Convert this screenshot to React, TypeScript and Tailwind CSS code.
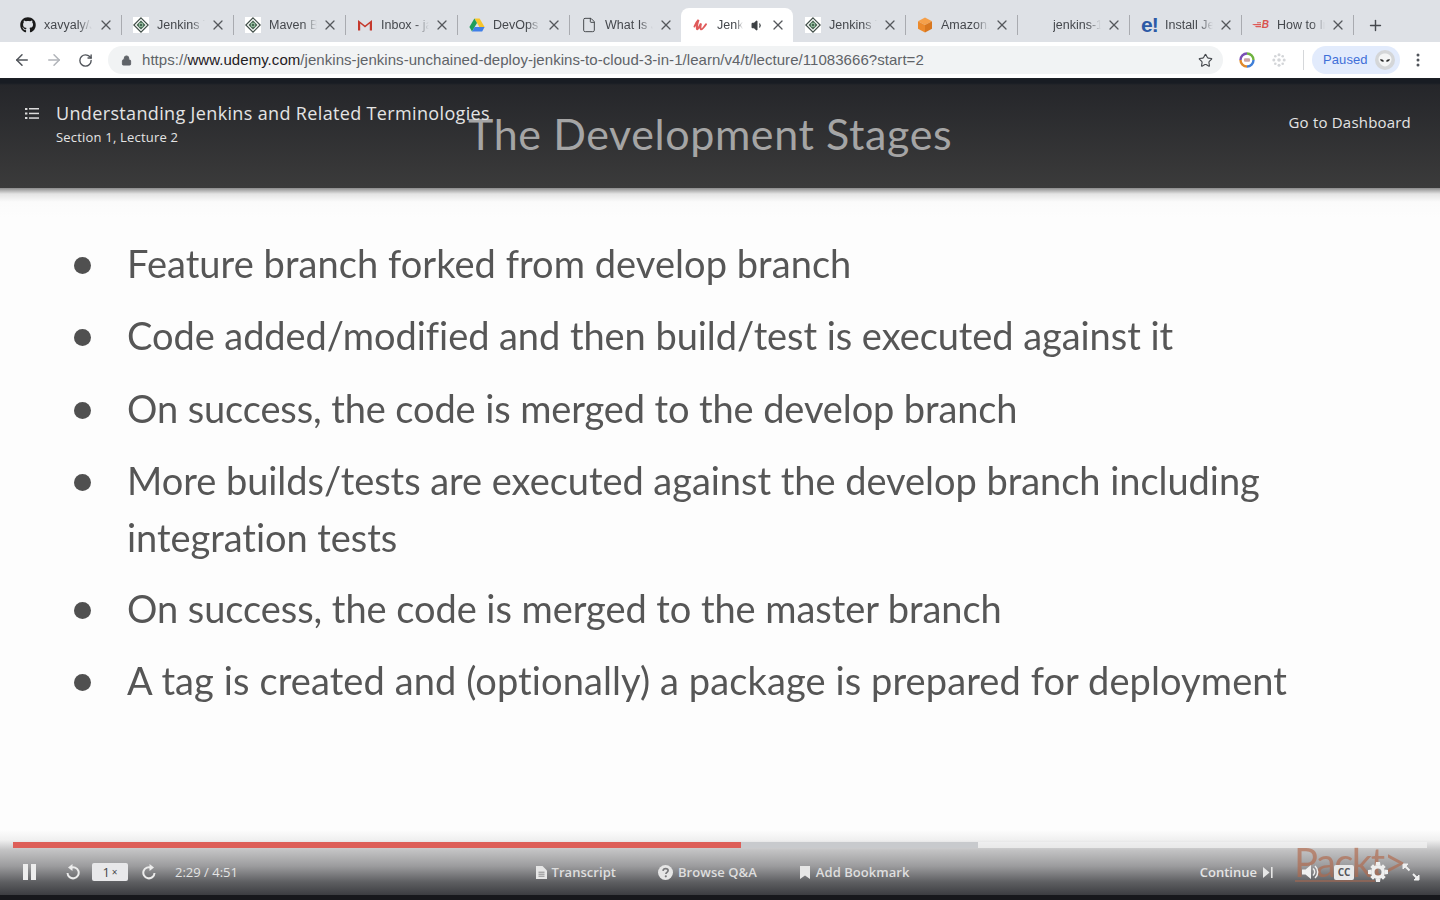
import React from "react";
import { ArrowLeft, ArrowRight, RotateCw, Star, X, Plus, File, Lock, Volume1 } from "lucide-react";
import { FaGithub } from "react-icons/fa";

const JenkinsIcon = () => (
  <svg width="16" height="16" viewBox="0 0 16 16" className="bg-white shrink-0">
    <path d="M8 .8 15.2 8 8 15.2.8 8Z" fill="#f4f6f4" stroke="#3c4a44" strokeWidth="1.1" />
    <path d="M8 3.6 12.4 8 8 12.4 3.6 8Z" fill="#3d5e49" />
    <circle cx="8" cy="8" r="2.4" fill="#8fb89a" />
    <circle cx="8" cy="8" r="1" fill="#2f4a3a" />
  </svg>
);
const GmailIcon = () => (
  <svg width="16" height="16" viewBox="0 0 16 16" className="shrink-0">
    <path d="M1 13.5V3l7 5.6L15 3v10.5h-2.2V6.6L8 10.6 3.2 6.6v6.9Z" fill="#c5392c" />
  </svg>
);
const DriveIcon = () => (
  <svg width="16" height="16" viewBox="0 0 16 16" className="shrink-0">
    <path d="M5.4 1.5h5.2l5 8.5h-5.2Z" fill="#f7c52b" />
    <path d="M5.4 1.5 .4 10l2.6 4.5 5-8.5Z" fill="#1e9e5a" />
    <path d="M3 14.5h10.2l2.4-4.5H5.6Z" fill="#3f7fe8" />
  </svg>
);
const UdemyIcon = () => (
  <svg width="16" height="16" viewBox="0 0 16 16" className="shrink-0" fill="none" stroke="#e05a5a" strokeWidth="2" strokeLinecap="round">
    <path d="M1.5 9.5C2.5 7 4 4.5 5.5 3 4.5 6 3.6 10 4 12c.5 1 2.5-2.5 4-5.5-.6 2.500-.8 5 0 5.800 1 .6 3-2 5-5" />
  </svg>
);
const AmazonIcon = () => (
  <svg width="16" height="16" viewBox="0 0 16 16" className="shrink-0">
    <path d="M8 .5 15 4.200 8 8 1 4.200Z" fill="#f5a04a" />
    <path d="M1 4.200 8 8v7.500L1 11.700Z" fill="#ec8a2c" />
    <path d="M15 4.200 8 8v7.500l7-3.800Z" fill="#d8771f" />
  </svg>
);
const WingIcon = () => (
  <span className="w-4 shrink-0 flex items-center justify-end gap-[1px]">
    <svg width="9" height="6" viewBox="0 0 9 6" fill="#de5a56" className="shrink-0 -ml-[3px]">
      <path d="M0 2h9v1.200H2ZM3 4h6v1.200H4ZM5 .2h4v1H5Z" />
    </svg>
    <span className="text-[10px] leading-4 font-bold italic text-[#d9534f]">B</span>
  </span>
);
const ExtRing = () => (
  <svg width="16" height="16" viewBox="0 0 16 16" fill="none" strokeWidth="2.4">
    <path d="M1.500 8A6.500 6.500 0 0 1 8 1.500" stroke="#7a4fb5" />
    <path d="M8 1.500A6.500 6.500 0 0 1 14.500 8" stroke="#6fb33f" />
    <path d="M14.500 8A6.500 6.500 0 0 1 8 14.500" stroke="#3f7fd8" />
    <path d="M8 14.500A6.500 6.500 0 0 1 1.500 8" stroke="#e08a2c" />
    <rect x="5" y="6.200" width="6" height="3.600" rx="1" fill="#c9a4a4" stroke="none" />
  </svg>
);
const Snow = () => (
  <svg width="14" height="14" viewBox="0 0 14 14" fill="#d3d5d8">
    <circle cx="7" cy="7" r="1.800" /><circle cx="7" cy="1.800" r="1.500" /><circle cx="7" cy="12.200" r="1.500" />
    <circle cx="1.800" cy="7" r="1.500" /><circle cx="12.200" cy="7" r="1.500" /><circle cx="3.300" cy="3.300" r="1.300" />
    <circle cx="10.700" cy="3.300" r="1.300" /><circle cx="3.300" cy="10.700" r="1.300" /><circle cx="10.700" cy="10.700" r="1.300" />
  </svg>
);
const Alien = () => (
  <svg width="20" height="20" viewBox="0 0 20 20">
    <circle cx="10" cy="10" r="10" fill="#d4d6d8" />
    <path d="M3.500 9C4 5 7 3.500 10 3.500S16 5 16.500 9c.3 3-3.500 7.500-6.500 7.500S3.200 12 3.500 9Z" fill="#f4f5f5" />
    <path d="M5 9.500c2-.5 3.500.5 4 2-2 .5-3.500-.5-4-2ZM15 9.500c-2-.5-3.500.5-4 2 2 .5 3.500-.5 4-2Z" fill="#2c2c2c" />
  </svg>
);
const ListIcon = () => (
  <svg width="14" height="13" viewBox="0 0 14 13" fill="#dcdcdc">
    <rect x="0" y="1" width="2.400" height="2" /><rect x="4" y="1" width="10" height="1.500" />
    <rect x="0" y="5.500" width="2.400" height="2" /><rect x="4" y="5.700" width="10" height="1.500" />
    <rect x="0" y="10" width="2.400" height="2" /><rect x="4" y="10.300" width="10" height="1.500" />
  </svg>
);
const Replay = ({ flip }: { flip?: boolean }) => (
  <svg width="14" height="16" viewBox="0 0 14 16" fill="none" className={flip ? "-scale-x-100" : ""}>
    <path d="M4.500 3.800A5.600 5.600 0 1 1 1.500 9" stroke="#ececec" strokeWidth="2" />
    <path d="M6.500 0v7L2 3.500Z" fill="#ececec" />
  </svg>
);
const DocIcon = () => (
  <svg width="11" height="13" viewBox="0 0 11 13">
    <path d="M0 0h6.500L11 4.500V13H0Z" fill="#e6e6e6" />
    <path d="M2.500 6.200h6M2.500 8.200h6M2.500 10.200h6" stroke="#8a8a8c" strokeWidth="1" />
  </svg>
);
const QIcon = () => (
  <svg width="15" height="15" viewBox="0 0 15 15">
    <circle cx="7.500" cy="7.500" r="7.500" fill="#e6e6e6" />
    <path d="M5 5.800c.2-1.500 1.200-2.200 2.600-2.200s2.500.8 2.500 2c0 1.800-2.200 1.700-2.200 3.400" fill="none" stroke="#7a7a7c" strokeWidth="1.700" />
    <circle cx="7.800" cy="11.300" r="1.100" fill="#7a7a7c" />
  </svg>
);
const BookmarkIcon = () => (
  <svg width="10" height="13" viewBox="0 0 10 13"><path d="M0 0h10v13L5 9.500 0 13Z" fill="#e6e6e6" /></svg>
);
const SkipIcon = () => (
  <svg width="10" height="11" viewBox="0 0 10 11" fill="#e6e6e6"><path d="M0 0v11l6.500-5.500Z" /><rect x="8" y="0" width="1.600" height="11" /></svg>
);
const SoundIcon = () => (
  <svg width="18" height="16" viewBox="0 0 18 16" fill="none">
    <path d="M0 5.500h3.500L9 1v14l-5.500-4.500H0Z" fill="#efefef" />
    <path d="M11 4.500a4.500 4.500 0 0 1 0 7M13 2a8 8 0 0 1 0 12" stroke="#efefef" strokeWidth="1.500" />
  </svg>
);
const CC = () => (
  <div className="w-[20px] h-[15px] rounded-[2px] bg-[#e9e9e9] flex items-center justify-center text-[#55565a] text-[10px] font-bold leading-none [font-family:'Open_Sans',sans-serif]">CC</div>
);
const Gear = () => (
  <svg width="20" height="20" viewBox="0 0 20 20">
    <circle cx="10" cy="10" r="5.200" fill="none" stroke="#efefef" strokeWidth="3.400" />
    <path d="M8 0h4l.5 3.500h-5ZM8 20h4l.5-3.500h-5ZM0 8v4l3.500.5v-5ZM20 8v4l-3.500.5v-5ZM2.300 5 5 2.300l2.500 2.500L4.800 7.500ZM17.700 5 15 2.300l-2.500 2.500 2.700 2.700ZM2.300 15 5 17.700l2.500-2.500-2.700-2.700ZM17.700 15 15 17.700l-2.500-2.500 2.700-2.700Z" fill="#efefef" />
  </svg>
);
const Expand = () => (
  <svg width="18" height="18" viewBox="0 0 18 18" fill="none" stroke="#efefef" strokeWidth="2">
    <path d="M1.500 1.500 7.500 7.500M11 11l5.500 5.500" />
    <path d="M1 6V1h5Z" fill="#efefef" strokeWidth="1" /><path d="M17 12v5h-5Z" fill="#efefef" strokeWidth="1" />
  </svg>
);

type Tab = { title: string; icon?: React.ReactNode; active?: boolean };
const tabs: Tab[] = [
  { title: "xavyaly/Jenkins", icon: <FaGithub size={16} color="#1a1a1a" className="shrink-0 -ml-[1px]" /> },
  { title: "Jenkins Tutorial", icon: <JenkinsIcon /> },
  { title: "Maven Build", icon: <JenkinsIcon /> },
  { title: "Inbox - jacob", icon: <GmailIcon /> },
  { title: "DevOps Guide", icon: <DriveIcon /> },
  { title: "What Is Jenkins", icon: <File size={16} strokeWidth={1.400} color="#3c4043" className="shrink-0" /> },
  { title: "Jenkins Unchained", icon: <UdemyIcon />, active: true },
  { title: "Jenkins Tutorial", icon: <JenkinsIcon /> },
  { title: "Amazon.com EC2", icon: <AmazonIcon /> },
  { title: "jenkins-1", icon: <span className="w-4 shrink-0" /> },
  {
    title: "Install Jenkins",
    icon: <span className="w-4 shrink-0 text-[21px] leading-4 font-bold text-[#2c5aa6] tracking-[-1px]">e!</span>,
  },
  { title: "How to Install", icon: <WingIcon /> },
];

const bullets: { lines: string[]; track: string; extra?: string }[] = [
  { lines: ["Feature branch forked from develop branch"], track: "tracking-[0.05px]" },
  { lines: ["Code added/modified and then build/test is executed against it"], track: "tracking-[-0.06px]" },
  { lines: ["On success, the code is merged to the develop branch"], track: "tracking-[-0.115px]" },
  { lines: ["More builds/tests are executed against the develop branch including", "integration tests"], track: "tracking-[-0.04px]", extra: "-mb-px" },
  { lines: ["On success, the code is merged to the master branch"], track: "tracking-[-0.06px]" },
  { lines: ["A tag is created and (optionally) a package is prepared for deployment"], track: "tracking-[0.1px]" },
];

function TabItem({ t, hideSep }: { t: Tab; hideSep: boolean }) {
  return (
    <div className={`relative w-[112px] h-[34px] flex items-center pl-[12px] pr-[7px] shrink-0 ${t.active ? "bg-white rounded-t-[8px]" : ""}`}>
      {t.icon}
      <span className={`ml-[8px] overflow-hidden whitespace-nowrap text-[12.5px] leading-4 text-[#45484d] ${t.active ? "w-[26px]" : "w-[48px]"} [mask-image:linear-gradient(to_right,black_72%,transparent)]`}>
        {t.title}
      </span>
      {t.active && <Volume1 size={13} fill="#3c4043" color="#3c4043" className="ml-[8px] shrink-0" />}
      <X size={16} strokeWidth={1.900} color="#55585c" className="ml-auto shrink-0" />
      {!hideSep && <span className="absolute -right-px top-[7px] h-[20px] w-px bg-[#a9abb0]" />}
    </div>
  );
}

export default function App() {
  return (
    <div className="w-[1440px] h-[900px] overflow-hidden flex flex-col bg-white [font-family:'Liberation_Sans',sans-serif]">
      <div className="h-[42px] bg-[#dee1e6] flex items-end pl-[9px] shrink-0">
        {tabs.map((t, i) => (
          <TabItem key={i} t={t} hideSep={t.active === true || tabs[i + 1]?.active === true} />
        ))}
        <Plus size={17} strokeWidth={2} color="#45484d" className="ml-[14px] mb-[8px]" />
      </div>

      <div className="h-[37px] bg-white border-b border-[#1d2026] flex items-center pl-[13px] shrink-0">
        <ArrowLeft size={18} strokeWidth={2} color="#50545a" />
        <ArrowRight size={18} strokeWidth={2} color="#b1b4b9" className="ml-[14px]" />
        <RotateCw size={15} strokeWidth={2.200} color="#50545a" className="ml-[15px]" />
        <div className="ml-[15px] w-[1115px] h-[28px] rounded-full bg-[#f1f3f4] flex items-center pl-[13px] pr-[10px]">
          <Lock size={11} fill="#5f6368" color="#5f6368" strokeWidth={2} />
          <span className="ml-[10px] text-[15px] tracking-[0.05px] text-[#5f6368] whitespace-nowrap">
            https://<span className="text-[#1f2023]">www.udemy.com</span>/jenkins-jenkins-unchained-deploy-jenkins-to-cloud-3-in-1/learn/v4/t/lecture/11083666?start=2
          </span>
          <Star size={15} strokeWidth={1.800} color="#45484d" className="ml-auto" />
        </div>
        <div className="ml-[16px]"><ExtRing /></div>
        <div className="ml-[17px]"><Snow /></div>
        <span className="ml-[17px] h-[20px] w-px bg-[#d5d7da]" />
        <div className="ml-[8px] w-[88px] h-[28px] rounded-full bg-[#e2ebfc] flex items-center pl-[11px]">
          <span className="w-[52px] text-[13px] tracking-[0.1px] text-[#3f6fd8]">Paused</span>
          <Alien />
        </div>
        <svg width="4" height="14" viewBox="0 0 4 14" fill="#50545a" className="ml-[16px]">
          <circle cx="2" cy="2" r="1.500" /><circle cx="2" cy="7" r="1.500" /><circle cx="2" cy="12" r="1.500" />
        </svg>
      </div>

      <div className="relative h-[109px] shrink-0 bg-[linear-gradient(#181c23_0,#181c23_4px,#25262a_6px,#3b3b3b_100%)] flex items-start justify-between text-[#e4e4e4] [font-family:'Open_Sans',sans-serif]">
        <span className="absolute left-[468px] top-[26px] text-[43px] leading-[58px] tracking-[0.6px] text-[#a5a5a5] whitespace-nowrap [font-family:'Lato',sans-serif]">
          The Development Stages
        </span>
        <div className="relative flex items-start pl-[25px] pt-[25px]">
          <div className="pt-[3px]"><ListIcon /></div>
          <div className="ml-[17px]">
            <div className="text-[18px] leading-[18px] tracking-[0.35px] whitespace-nowrap">Understanding Jenkins and Related Terminologies</div>
            <div className="mt-[6px] text-[13px] leading-[18px] tracking-[0.2px]">Section 1, Lecture 2</div>
          </div>
        </div>
        <div className="relative pr-[29px] pt-[33px] text-[15px] leading-5 tracking-[0.2px]">Go to Dashboard</div>
      </div>

      <div className="flex-1 bg-[linear-gradient(#8c8c8c_0,#e4e4e4_6px,#fbfbfb_14px,#fdfdfd_30px)] pt-[47px] pl-[74px] text-[#565656] [font-family:'Lato',sans-serif] text-[38px] leading-[57px] flex flex-col gap-[15.25px] min-h-0">
        {bullets.map((b, i) => (
          <div key={i} className={`flex items-start ${b.extra ?? ""}`}>
            <span className="w-[17px] h-[17px] rounded-full bg-[#505050] mt-[22px] shrink-0" />
            <div className={`ml-[37px] -translate-x-px blur-[0.3px] ${b.track}`}>
              {b.lines.map((l) => <div key={l} className="whitespace-nowrap">{l}</div>)}
            </div>
          </div>
        ))}
      </div>

      <div className="relative h-[70px] shrink-0 bg-[linear-gradient(#fdfdfd_0,#f0f0f0_10px,#c3c3c4_20px,#9c9c9e_36px,#5e5f62_52px,#3c3d41_65px,#17181c_65px)] [font-family:'Open_Sans',sans-serif] text-[#e4e4e4]">
        <span className="absolute left-[1294px] top-[12px] text-[40px] leading-[40px] tracking-[-1.500px] [font-family:'Lato',sans-serif] text-[#b0684c]/65 whitespace-nowrap blur-[0.5px]">Packt&gt;</span>
        <span className="absolute left-[1295px] top-[50px] w-[80px] h-[2px] bg-[#b0684c]/50" />
        <div className="relative pt-[12px] px-[13px]">
          <div className="h-[6px] flex bg-[#f2f2f2]/75">
            <div className="w-[728px] bg-[#dd5e58]" />
            <div className="w-[237px] bg-[#c8cacd]" />
          </div>
        </div>
        <div className="relative grid grid-cols-[1fr_auto_1fr] items-center h-[18px] mt-[14px] text-[13px] leading-[18px]">
          <div className="flex items-center pl-[23px]">
            <div className="flex gap-[3px]">
              <span className="w-[5px] h-[16px] bg-[#ededed]" />
              <span className="w-[5px] h-[16px] bg-[#ededed]" />
            </div>
            <span className="ml-[30px]"><Replay /></span>
            <span className="ml-[12px] w-[36px] h-[18px] rounded-[2px] bg-[#e8e8ea] text-[#46474b] flex items-center justify-center">1 <span className="text-[10px] ml-[2px]">×</span></span>
            <span className="ml-[14px]"><Replay flip /></span>
            <span className="ml-[19px] whitespace-nowrap">2:29 / 4:51</span>
          </div>
          <div className="flex items-center font-semibold text-[#dedede] pl-[6px] tracking-[0.05px]">
            <DocIcon />
            <span className="ml-[4px]">Transcript</span>
            <span className="ml-[42px]"><QIcon /></span>
            <span className="ml-[5px]">Browse Q&amp;A</span>
            <span className="ml-[43px]"><BookmarkIcon /></span>
            <span className="ml-[6px]">Add Bookmark</span>
          </div>
          <div className="flex items-center justify-end pr-[20px]">
            <span className="font-semibold">Continue</span>
            <span className="ml-[6px]"><SkipIcon /></span>
            <span className="ml-[29px]"><SoundIcon /></span>
            <span className="ml-[14px]"><CC /></span>
            <span className="ml-[14px]"><Gear /></span>
            <span className="ml-[14px]"><Expand /></span>
          </div>
        </div>
      </div>
    </div>
  );
}
